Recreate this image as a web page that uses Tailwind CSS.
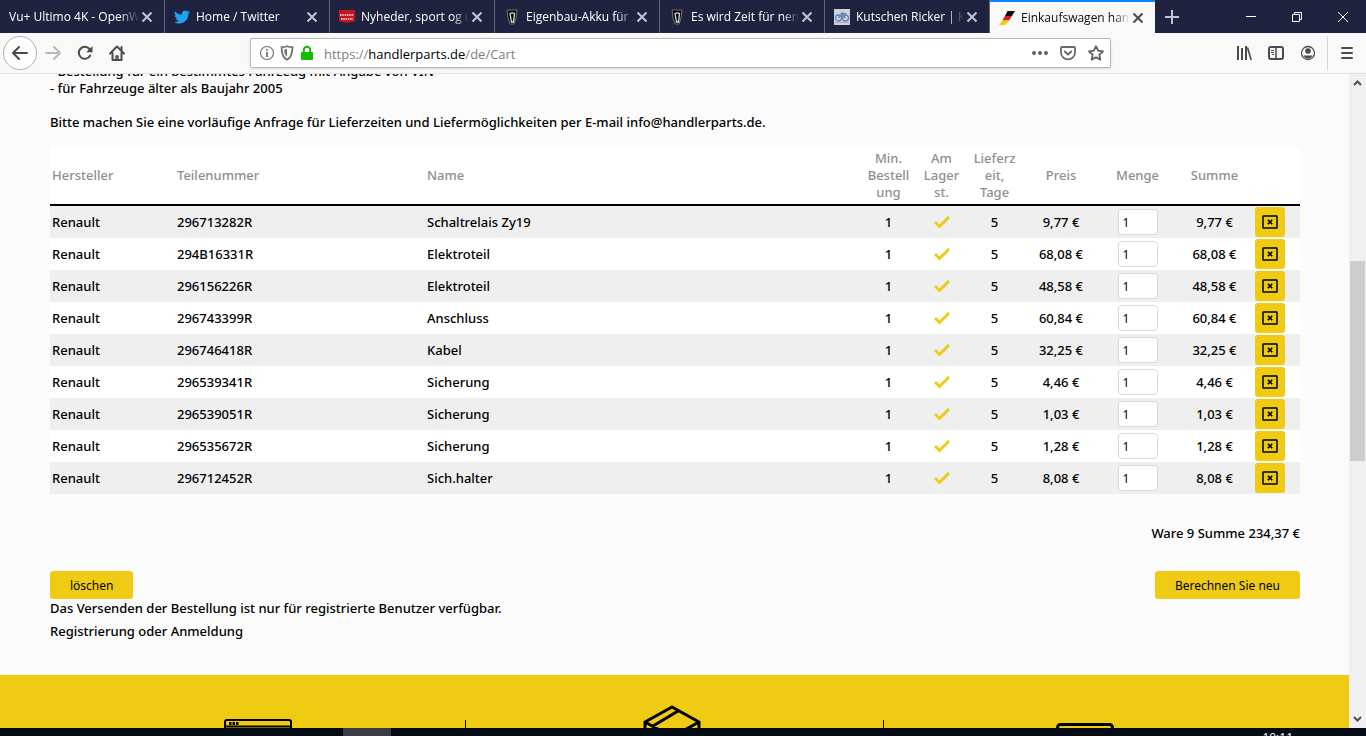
<!DOCTYPE html>
<html lang="de">
<head>
    <meta charset="UTF-8">
    <meta name="viewport" content="width=device-width, initial-scale=1.0">
    <title>Einkaufswagen handlerparts.de</title>
    <script src="https://cdn.jsdelivr.net/npm/@tailwindcss/browser@4"></script>
</head>
<body class="h-screen flex flex-col overflow-hidden bg-[#fbfbfb] font-['Open_Sans','Noto_Sans',sans-serif]">

    <!-- Tabs -->
    <header class="h-[33px] shrink-0 flex bg-[#202340] text-white text-xs">
        <div id="tabs" class="flex"></div>
        <button aria-label="Neuer Tab" class="w-[34px] flex items-center justify-center">
            <svg class="w-4 h-4" viewBox="0 0 16 16" fill="none" stroke="#c4c5d0" stroke-width="2"><path d="M8 1v14M1 8h14"/></svg>
        </button>
        <div class="ml-auto flex">
            <button aria-label="Minimieren" class="w-[46px] flex items-center justify-center">
                <svg class="w-[10px] h-[10px]" viewBox="0 0 10 10" stroke="#fff"><path d="M0 4.500h10"/></svg>
            </button>
            <button aria-label="Verkleinern" class="w-[46px] flex items-center justify-center">
                <svg class="w-[10px] h-[10px]" viewBox="0 0 10 10" fill="none" stroke="#fff"><path d="M.5 2.500h7v7h-7zM2.500 2.500v-2h7v7h-2"/></svg>
            </button>
            <button aria-label="Schließen" class="w-[46px] flex items-center justify-center">
                <svg class="w-[10px] h-[10px]" viewBox="0 0 10 10" stroke="#fff"><path d="M0 0l10 10M10 0L0 10"/></svg>
            </button>
        </div>
    </header>

    <!-- Toolbar -->
    <nav class="h-[41px] shrink-0 flex items-center bg-[#f9f9fa] border-b border-[#e0e0e1] text-[#4a4a4f]">
        <button aria-label="Zurück" class="ml-[3px] w-[34px] h-[34px] rounded-full border border-[#b1b1b3] bg-white flex items-center justify-center">
            <svg class="w-4 h-4" viewBox="0 0 16 16" fill="none" stroke="currentColor" stroke-width="2" stroke-linecap="round" stroke-linejoin="round"><path d="M15 8H1.500M7 2L1 8l6 6"/></svg>
        </button>
        <button aria-label="Vor" class="w-8 flex items-center justify-center text-[#b8b8ba]">
            <svg class="w-4 h-4" viewBox="0 0 16 16" fill="none" stroke="currentColor" stroke-width="2" stroke-linecap="round" stroke-linejoin="round"><path d="M1 8h13.500M9 2l6 6-6 6"/></svg>
        </button>
        <button aria-label="Neu laden" class="w-8 flex items-center justify-center">
            <svg class="w-4 h-4" viewBox="0 0 16 16"><path d="M13.200 10.500A6 6 0 1 1 12.500 4" fill="none" stroke="currentColor" stroke-width="2" stroke-linecap="round"/><path d="M15.500 1v6.300h-6.300z" fill="currentColor"/></svg>
        </button>
        <button aria-label="Startseite" class="w-8 flex items-center justify-center">
            <svg class="w-4 h-4" viewBox="0 0 16 16" fill="none" stroke="currentColor" stroke-width="2" stroke-linejoin="round" stroke-linecap="round"><path d="M1 8.500L8 1.500l7 7M3.500 8v7h9V8"/><path d="M7 15v-4h2v4" stroke-width="1.500"/><path d="M12.500 2v3"/></svg>
        </button>
        <div class="ml-[117px] w-[861px] h-[30px] bg-white border border-[#b8b8ba] rounded-xs shadow-sm flex items-center pl-2">
            <svg class="w-4 h-4 shrink-0" viewBox="0 0 16 16" fill="none" stroke="#737373"><circle cx="8" cy="8" r="6.500" stroke-width="1.200"/><path d="M8 7v5M8 4v1.700" stroke-width="1.800"/></svg>
            <svg class="ml-1 w-4 h-4 shrink-0" viewBox="0 0 16 16"><path d="M8 1.200c2 .9 3.700 1 5.400 1 0 5.500-.6 10.200-5.400 12.600C3.200 12.400 2.600 7.700 2.600 2.200c1.700 0 3.400-.1 5.400-1z" fill="none" stroke="#737373" stroke-width="1.800"/><path d="M8 4v8c-2-1.500-2.700-4-2.800-7.400C6.200 4.500 7 4.300 8 4z" fill="#737373"/></svg>
            <svg class="ml-1 w-4 h-4 shrink-0" viewBox="0 0 16 16"><rect x="2" y="7" width="12" height="8" rx="1" fill="#12bc00"/><path d="M4.800 8V5a3.200 3.200 0 0 1 6.400 0v3" fill="none" stroke="#12bc00" stroke-width="2"/></svg>
            <label for="url" class="sr-only">Adresse</label>
            <div class="ml-[9px] flex-1 relative text-[13px]">
                <input id="url" type="text" value="https://handlerparts.de/de/Cart" class="block w-full h-5 text-transparent caret-black outline-none">
                <span aria-hidden="true" class="absolute inset-0 pt-[3px] flex items-center text-[#808080] pointer-events-none">https://<span class="text-black">handlerparts.de</span>/de/Cart</span>
            </div>
            <button aria-label="Seitenaktionen" class="w-7 flex justify-center">
                <svg class="w-4 h-4" viewBox="0 0 16 16" fill="#606064"><circle cx="2" cy="8" r="2"/><circle cx="8" cy="8" r="2"/><circle cx="14" cy="8" r="2"/></svg>
            </button>
            <button aria-label="Pocket" class="w-7 flex justify-center">
                <svg class="w-4 h-4" viewBox="0 0 16 16" fill="none" stroke="#68686c" stroke-width="1.800" stroke-linecap="round" stroke-linejoin="round"><path d="M2 2h12a1 1 0 0 1 1 1v4.500a7 6.800 0 0 1-14 0V3a1 1 0 0 1 1-1z"/><path d="M4.800 6.500L8 9.500l3.200-3" stroke-width="2"/></svg>
            </button>
            <button aria-label="Lesezeichen" class="w-7 flex justify-center">
                <svg class="w-4 h-4" viewBox="0 0 16 16" fill="none" stroke="#606064" stroke-width="1.800" stroke-linejoin="round"><path d="M8 1.200l2.100 4.500 4.900.6-3.600 3.400.9 4.900L8 12.200l-4.300 2.400.9-4.900L1 6.300l4.900-.6z"/></svg>
            </button>
        </div>
        <div class="ml-auto h-full flex items-center">
            <button aria-label="Bibliothek" class="w-8 flex justify-center">
                <svg class="w-4 h-4" viewBox="0 0 16 16" fill="none" stroke="currentColor" stroke-width="2"><path d="M2 1v14M6 3v12M10 1v14"/><path d="M11.500 2.500L15.200 15" stroke-width="1.600"/></svg>
            </button>
            <button aria-label="Seitenleiste" class="w-8 flex justify-center">
                <svg class="w-4 h-4" viewBox="0 0 16 16" fill="none" stroke="currentColor"><rect x="1" y="2" width="14" height="12" rx="2" stroke-width="2"/><path d="M8 2v12" stroke-width="1.500"/><path d="M3 5.500h3M3 7.500h3M4 9.500h2"/></svg>
            </button>
            <button aria-label="Konto" class="w-8 flex justify-center">
                <svg class="w-4 h-4" viewBox="0 0 16 16"><circle cx="8" cy="8" r="6.500" fill="none" stroke="currentColor" stroke-width="1.300"/><circle cx="8" cy="6" r="2.800" fill="currentColor"/><path d="M3.500 10.500h9c-.8 2-2.500 3-4.500 3s-3.700-1-4.500-3z" fill="currentColor"/></svg>
            </button>
            <button aria-label="Menü" class="ml-[3px] w-[39px] h-[34px] border-l border-[#d7d7db] flex items-center justify-center">
                <svg class="w-4 h-4" viewBox="0 0 16 16" fill="none" stroke="currentColor" stroke-width="2" stroke-linecap="round"><path d="M3 3h10M3 8h10M3 13h10"/></svg>
            </button>
        </div>
    </nav>

    <div class="flex-1 min-h-0 flex">
        <main class="flex-1 min-w-0 overflow-hidden flex flex-col text-[13px] leading-[17px] text-black font-medium font-['Noto_Sans',sans-serif]">
            <div class="pl-[50px] pr-[49px] -mt-[11px] pb-[35px]">
                <p>- Bestellung für ein bestimmtes Fahrzeug mit Angabe von VIN</p>
                <p>- für Fahrzeuge älter als Baujahr 2005</p>
                <p class="mt-[17px]">Bitte machen Sie eine vorläufige Anfrage für Lieferzeiten und Liefermöglichkeiten per E-mail info@handlerparts.de.</p>

                <table class="mt-4 w-full table-fixed border-separate border-spacing-0 bg-white text-center">
                    <colgroup>
                        <col class="w-[125px]"><col class="w-[250px]"><col>
                        <col class="w-[53px]"><col class="w-[53px]"><col class="w-[53px]">
                        <col class="w-[80px]"><col class="w-[73px]"><col class="w-[81px]"><col class="w-[45px]">
                    </colgroup>
                    <thead class="text-[#8f8f8f]">
                        <tr class="h-[59px] *:border-b-2 *:border-black *:font-medium">
                            <th class="pl-[2px] text-left">Hersteller</th>
                            <th class="pl-[2px] text-left">Teilenummer</th>
                            <th class="pl-[2px] text-left">Name</th>
                            <th>Min.<br>Bestell<br>ung</th>
                            <th>Am<br>Lager<br>st.</th>
                            <th>Lieferz<br>eit,<br>Tage</th>
                            <th>Preis</th>
                            <th>Menge</th>
                            <th>Summe</th>
                            <th></th>
                        </tr>
                    </thead>
                    <tbody id="cart"></tbody>
                </table>

                <p class="mt-[31px] text-right">Ware 9 Summe 234,37 €</p>
                <div class="mt-[29px] flex justify-between font-normal text-xs">
                    <button class="h-7 px-5 pt-px rounded-[3px] bg-[#efcc13]">löschen</button>
                    <button class="h-7 px-5 pt-px rounded-[3px] bg-[#efcc13]">Berechnen Sie neu</button>
                </div>
                <p class="mt-px">Das Versenden der Bestellung ist nur für registrierte Benutzer verfügbar.</p>
                <p class="mt-[6px]"><a href="#">Registrierung</a> oder <a href="#">Anmeldung</a></p>
            </div>

            <section class="flex-1 min-h-0 overflow-hidden bg-[#efcc13] px-[50px] pt-[30px] grid grid-cols-3">
                <div class="mt-[15px] flex justify-center border-r border-black">
                    <svg class="-mt-px w-[68px] h-[50px] shrink-0" viewBox="0 0 68 50" fill="none" stroke="#000" stroke-width="2"><rect x="1" y="1" width="66" height="48" rx="2"/><path d="M0 7.500h68"/><path d="M5 4.500h10" stroke-width="3" stroke-dasharray="2.500 1"/></svg>
                </div>
                <div class="pr-1 flex justify-center">
                    <svg class="w-[58px] h-[64px] shrink-0" viewBox="0 0 58 64" fill="none" stroke="#000" stroke-width="3" stroke-linejoin="round"><path d="M29 2l27 15v30L29 62 2 47V17zM2 17l27 15 27-15M29 32v30M10 21L35 6"/></svg>
                </div>
                <div class="mt-[15px] pr-3 flex justify-center border-l border-black">
                    <svg class="mt-[3px] w-[58px] h-[50px] shrink-0" viewBox="0 0 58 50" fill="none" stroke="#000" stroke-width="3"><rect x="1.500" y="1.500" width="55" height="47" rx="3"/></svg>
                </div>
            </section>
        </main>

        <!-- Scrollbar -->
        <aside class="w-[17px] bg-[#f0f0f0] flex flex-col items-center justify-between">
            <svg class="w-[17px] h-[17px]" viewBox="0 0 17 17" fill="none" stroke="#505050" stroke-width="2"><path d="M5 11l3.500-3.500L12 11"/></svg>
            <div class="w-[15px] h-[200px] bg-[#cdcdcd] mb-[80px]"></div>
            <svg class="w-[17px] h-[17px]" viewBox="0 0 17 17" fill="none" stroke="#505050" stroke-width="2"><path d="M5 6l3.500 3.500L12 6"/></svg>
        </aside>
    </div>

    <!-- Taskbar -->
    <footer class="h-2 shrink-0 overflow-hidden flex bg-[#050b14] text-white text-xs">
        <div class="ml-[343px] w-12 bg-[#3a3c41]"></div>
        <span class="ml-auto mr-[73px] mt-[2px] leading-4">10:11</span>
    </footer>

    <template id="favicons">
        <svg data-icon="twitter" class="w-4 h-4 mr-[6px] shrink-0" viewBox="0 0 24 24" fill="#1da1f2"><path d="M24 4.600a10 10 0 0 1-2.800.8 4.900 4.900 0 0 0 2.200-2.700 10 10 0 0 1-3.100 1.200 4.900 4.900 0 0 0-8.400 4.500A14 14 0 0 1 1.700 3.200a4.900 4.900 0 0 0 1.500 6.500 4.900 4.900 0 0 1-2.200-.6 4.900 4.900 0 0 0 3.900 4.900 5 5 0 0 1-2.200.1 4.900 4.900 0 0 0 4.600 3.400A9.900 9.900 0 0 1 0 19.500 14 14 0 0 0 21.500 7.100 10 10 0 0 0 24 4.600z"/></svg>
        <svg data-icon="ekstra" class="w-4 h-4 mr-[6px] shrink-0" viewBox="0 0 16 16"><path d="M0 1h16v11l-8 2-8-2z" fill="#c4161c"/><path d="M1 6h14M2 10h12" stroke="#eab4b7" stroke-width="2" stroke-dasharray="1.500 .8"/></svg>
        <svg data-icon="forum" class="w-4 h-4 mr-[6px] shrink-0" viewBox="0 0 16 16"><path d="M3 1h10l-1 8-2 6H6L4 9z" fill="#000" stroke="#77777b"/><path d="M6 4.500c2-1 3-1 4.500 0L9.500 13h-2z" fill="none" stroke="#ddd" stroke-width="1.300"/></svg>
        <svg data-icon="kutschen" class="w-4 h-4 mr-[6px] shrink-0" viewBox="0 0 16 16"><path d="M0 0h16v16H0z" fill="#ccd3da"/><g fill="none" stroke="#5f80b8" stroke-width="1.300"><circle cx="4.500" cy="9" r="3"/><circle cx="11.500" cy="9" r="3"/><path d="M4.500 9l3-4 4 4M7 4l5 1"/></g><path d="M1 13.500h14" stroke="#d79aa4"/></svg>
        <svg data-icon="handler" class="w-4 h-4 mr-[6px] shrink-0" viewBox="0 0 16 16"><path d="M8.500 1H16l-3 5H6z" fill="#111"/><path d="M6 6h7l-3 4.500H3.300z" fill="#d9202a"/><path d="M3.300 10.500H10L6.500 15H0z" fill="#efcc13"/></svg>
    </template>

    <script>
        const tabs = [
            ['Vu+ Ultimo 4K - OpenWebif', ''],
            ['Home / Twitter', 'twitter'],
            ['Nyheder, sport og underholdning', 'ekstra'],
            ['Eigenbau-Akku für Akkuschrauber', 'forum'],
            ['Es wird Zeit für nen Thread', 'forum'],
            ['Kutschen Ricker | Kutschen', 'kutschen'],
            ['Einkaufswagen handlerparts.de', 'handler'],
        ];
        const icons = document.getElementById('favicons').content;

        tabs.forEach(([title, icon], i) => {
            const active = i === tabs.length - 1;
            const tab = document.createElement('div');
            tab.className = active
                ? 'w-[165px] flex items-center pl-[9px] pr-[11px] border-t-2 border-[#0a84ff] bg-[#f9f9fa] text-[#0c0c0d]'
                : 'w-[165px] flex items-center pl-[9px] pr-[11px] border-r border-[#62647a]';
            if (icon) tab.append(icons.querySelector(`[data-icon=${icon}]`).cloneNode(true));
            tab.insertAdjacentHTML('beforeend', `
                <span class="pt-px flex-1 min-w-0 overflow-hidden whitespace-nowrap mask-r-from-85% mask-r-to-100%">${title}</span>
                <button aria-label="Tab schließen" class="ml-[2px] shrink-0"><svg class="w-3 h-3" viewBox="0 0 12 12" stroke="${active ? '#4a4a4f' : '#c4c5d0'}" stroke-width="2"><path d="M1.500 1.500l9 9M10.500 1.500l-9 9"/></svg></button>`);
            document.getElementById('tabs').append(tab);
        });

        const cart = [
            ['296713282R', 'Schaltrelais Zy19', '9,77'],
            ['294B16331R', 'Elektroteil', '68,08'],
            ['296156226R', 'Elektroteil', '48,58'],
            ['296743399R', 'Anschluss', '60,84'],
            ['296746418R', 'Kabel', '32,25'],
            ['296539341R', 'Sicherung', '4,46'],
            ['296539051R', 'Sicherung', '1,03'],
            ['296535672R', 'Sicherung', '1,28'],
            ['296712452R', 'Sich.halter', '8,08'],
        ];

        document.getElementById('cart').innerHTML = cart.map(([nr, name, price]) => `
            <tr class="h-8 odd:bg-[#efefef]">
                <td class="pl-[2px] text-left">Renault</td>
                <td class="pl-[2px] text-left">${nr}</td>
                <td class="pl-[2px] text-left">${name}</td>
                <td>1</td>
                <td><svg class="mx-auto w-4 h-4" viewBox="0 0 16 16" fill="none" stroke="#efcc13" stroke-width="3"><path d="M1 8l4.500 4.500L15 3"/></svg></td>
                <td>5</td>
                <td>${price} €</td>
                <td><input type="text" value="1" aria-label="Menge ${nr}" class="block mx-auto w-10 h-[26px] pl-1 pt-px rounded-sm border border-[#d9d9d9] bg-white font-normal text-xs"></td>
                <td>${price} €</td>
                <td><button aria-label="${nr} entfernen" class="w-[30px] h-[30px] rounded-[3px] bg-[#efcc13] flex items-center justify-center">
                    <svg class="w-4 h-4" viewBox="0 0 16 16" fill="none" stroke="#000"><rect x="1" y="2" width="14" height="12" rx=".5" stroke-width="1.500"/><path d="M5.800 5.800l4.400 4.400M10.200 5.800l-4.400 4.400" stroke-width="1.600"/></svg>
                </button></td>
            </tr>`).join('');
    </script>
</body>
</html>
